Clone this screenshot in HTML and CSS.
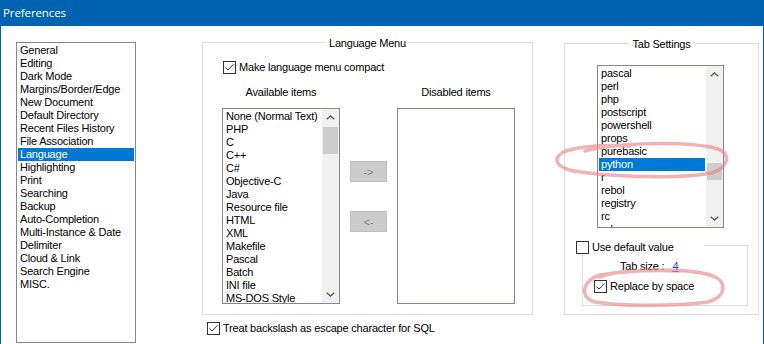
FILE: index.html
```html
<!DOCTYPE html>
<html lang="en">
<head>
    <meta charset="UTF-8">
    <title>Preferences</title>
    <link rel="stylesheet" href="styles.css">
</head>
<body>
    <div class="window">
        <div class="titlebar">Preferences</div>

        <div class="content">
            <ul class="listbox nav-list">
                <li class="item">General</li>
                <li class="item">Editing</li>
                <li class="item">Dark Mode</li>
                <li class="item">Margins/Border/Edge</li>
                <li class="item">New Document</li>
                <li class="item">Default Directory</li>
                <li class="item">Recent Files History</li>
                <li class="item">File Association</li>
                <li class="item selected">Language</li>
                <li class="item">Highlighting</li>
                <li class="item">Print</li>
                <li class="item">Searching</li>
                <li class="item">Backup</li>
                <li class="item">Auto-Completion</li>
                <li class="item">Multi-Instance &amp; Date</li>
                <li class="item">Delimiter</li>
                <li class="item">Cloud &amp; Link</li>
                <li class="item">Search Engine</li>
                <li class="item">MISC.</li>
            </ul>

            <div class="lang-col">
                <div class="group lang-group">
                    <div class="group-title">Language Menu</div>
                    <label class="check compact-check">
                        <span class="box"><svg viewBox="0 0 11 11"><polyline points="1.5,5.5 4,8 9.5,2.2"/></svg></span>
                        Make language menu compact
                    </label>

                    <div class="lang-lists">
                        <div class="list-column">
                            <div class="caption">Available items</div>
                            <div class="listbox lang-list">
                                <div class="items">
                                    <div class="item">None (Normal Text)</div>
                                    <div class="item">PHP</div>
                                    <div class="item">C</div>
                                    <div class="item">C++</div>
                                    <div class="item">C#</div>
                                    <div class="item">Objective-C</div>
                                    <div class="item">Java</div>
                                    <div class="item">Resource file</div>
                                    <div class="item">HTML</div>
                                    <div class="item">XML</div>
                                    <div class="item">Makefile</div>
                                    <div class="item">Pascal</div>
                                    <div class="item">Batch</div>
                                    <div class="item">INI file</div>
                                    <div class="item">MS-DOS Style</div>
                                </div>
                                <div class="scrollbar">
                                    <div class="arrow"><svg viewBox="0 0 9 5"><polyline points="0.7,4.3 4.5,0.9 8.3,4.3"/></svg></div>
                                    <div class="track"><div class="thumb avail-thumb"></div></div>
                                    <div class="arrow"><svg viewBox="0 0 9 5"><polyline points="0.7,0.7 4.5,4.1 8.3,0.7"/></svg></div>
                                </div>
                            </div>
                        </div>

                        <div class="move-buttons">
                            <button type="button">-&gt;</button>
                            <button type="button">&lt;-</button>
                        </div>

                        <div class="list-column">
                            <div class="caption">Disabled items</div>
                            <div class="listbox lang-list"></div>
                        </div>
                    </div>
                </div>

                <label class="check sql-check">
                    <span class="box"><svg viewBox="0 0 11 11"><polyline points="1.5,5.5 4,8 9.5,2.2"/></svg></span>
                    Treat backslash as escape character for SQL
                </label>
            </div>

            <div class="group tab-group">
                <div class="group-title">Tab Settings</div>
                <div class="listbox tab-list">
                    <div class="items">
                        <div class="item">pascal</div>
                        <div class="item">perl</div>
                        <div class="item">php</div>
                        <div class="item">postscript</div>
                        <div class="item">powershell</div>
                        <div class="item">props</div>
                        <div class="item">purebasic</div>
                        <div class="item selected">python</div>
                        <div class="item">r</div>
                        <div class="item">rebol</div>
                        <div class="item">registry</div>
                        <div class="item">rc</div>
                        <div class="item">ruby</div>
                    </div>
                    <div class="scrollbar">
                        <div class="arrow"><svg viewBox="0 0 9 5"><polyline points="0.7,4.3 4.5,0.9 8.3,4.3"/></svg></div>
                        <div class="track"><div class="thumb tab-thumb"></div></div>
                        <div class="arrow"><svg viewBox="0 0 9 5"><polyline points="0.7,0.7 4.5,4.1 8.3,0.7"/></svg></div>
                    </div>
                </div>

                <label class="check default-check">
                    <span class="box"></span>
                    Use default value
                </label>
                <div class="inner-group">
                    <div class="tab-size">Tab size :<a href="#">4</a></div>
                    <label class="check replace-check">
                        <span class="box"><svg viewBox="0 0 11 11"><polyline points="1.5,5.5 4,8 9.5,2.2"/></svg></span>
                        Replace by space
                    </label>
                </div>
            </div>
        </div>
    </div>

    <!-- hand-drawn highlight rings -->
    <svg class="marks" viewBox="0 0 764 344">
        <path d="M585 151 C620 142, 690 141, 718 149 C731 154, 729 167, 712 173 C680 179, 610 177, 574 171 C554 167, 552 157, 566 151 C585 145, 610 145, 630 146"/>
        <path d="M600 277 C622 268, 690 268, 713 276 C728 282, 726 297, 708 302 C670 307, 610 306, 592 301 C580 296, 582 281, 600 275 C630 270, 660 270, 680 271"/>
    </svg>
</body>
</html>
```

FILE: styles.css
```css
* {
    box-sizing: border-box;
}
body {
    margin: 0;
    position: relative;
    font-family: "Liberation Sans", Arial, sans-serif;
    font-size: 11px;
    letter-spacing: -0.2px;
    color: #000;
    background: #fff;
}
.window {
    height: 344px;
    border-left: 1px solid #0063b1;
    border-right: 1px solid #0063b1;
    overflow: hidden;
}
.titlebar {
    height: 26px;
    background: #0063b1;
    color: #fff;
    font-family: "Open Sans", sans-serif;
    font-size: 11.5px;
    letter-spacing: -0.1px;
    line-height: 26px;
    padding-left: 2px;
}
.content {
    display: flex;
    align-items: flex-start;
    padding: 16px 0 0 15px;
}
.listbox {
    border: 1px solid #828790;
    background: #fff;
    overflow: hidden;
}
.nav-list {
    width: 120px;
    height: 301px;
    margin: 0;
    padding: 1px;
    list-style: none;
}
.item {
    height: 13px;
    line-height: 13px;
    padding-left: 2px;
    white-space: nowrap;
}
.item.selected {
    background: #0078d7;
    color: #fff;
}
.lang-col {
    margin-left: 66px;
}
.group {
    border: 1px solid #dcdcdc;
}
.group-title {
    width: max-content;
    margin: -6px auto 0;
    padding: 0 3px;
    background: #fff;
    line-height: 13px;
}
.lang-group {
    width: 331px;
    height: 273px;
}
.check {
    display: flex;
    align-items: center;
    gap: 3px;
    line-height: 13px;
    white-space: nowrap;
}
.box {
    width: 13px;
    height: 13px;
    flex: none;
    display: flex;
    border: 1px solid #333;
    background: #fff;
}
.box svg {
    width: 11px;
    height: 11px;
    fill: none;
    stroke: #333;
    stroke-width: 1;
}
.compact-check {
    margin: 11px 0 0 20px;
}
.lang-lists {
    display: flex;
    gap: 10px;
    margin: 12px 0 0 19px;
}
.list-column {
    width: 118px;
}
.caption {
    text-align: center;
    line-height: 13px;
    margin-bottom: 9px;
}
.lang-list {
    height: 196px;
    display: flex;
}
.items {
    flex: 1;
    min-width: 0;
    padding: 1px;
}
.scrollbar {
    width: 17px;
    flex: none;
    display: flex;
    flex-direction: column;
    background: #f0f0f0;
}
.arrow {
    height: 17px;
    flex: none;
    display: flex;
    align-items: center;
    justify-content: center;
}
.arrow svg {
    width: 9px;
    height: 5px;
    fill: none;
    stroke: #606060;
    stroke-width: 1.4;
}
.track {
    flex: 1;
}
.thumb {
    margin: 0 1px;
    background: #cdcdcd;
}
.avail-thumb {
    margin-top: 1px;
    height: 27px;
}
.tab-thumb {
    margin-top: 80px;
    height: 17px;
}
.move-buttons {
    width: 37px;
    padding-top: 75px;
    display: flex;
    flex-direction: column;
    gap: 29px;
}
.move-buttons button {
    height: 21px;
    padding: 0;
    background: #cccccc;
    border: 1px solid #bfbfbf;
    color: #838383;
    font: inherit;
}
.sql-check {
    margin: 7px 0 0 5px;
}
.tab-group {
    width: 195px;
    height: 272px;
    margin: 1px 0 0 31px;
}
.tab-list {
    width: 127px;
    height: 163px;
    display: flex;
    margin: 14px 0 0 32px;
}
.default-check {
    position: relative;
    z-index: 1;
    width: 128px;
    margin: 13px 0 0 11px;
    background: #fff;
}
.inner-group {
    width: 166px;
    height: 61px;
    margin: -9px 0 0 17px;
    border: 1px solid #dcdcdc;
}
.tab-size {
    margin: 14px 0 0 37px;
    line-height: 13px;
}
.tab-size a {
    margin-left: 8px;
    color: #3434ff;
}
.replace-check {
    margin: 7px 0 0 11px;
}
.marks {
    position: absolute;
    top: 0;
    left: 0;
    width: 764px;
    height: 344px;
    pointer-events: none;
    fill: none;
    stroke: #e77f7f;
    stroke-width: 3.5;
    stroke-linecap: round;
    opacity: 0.6;
}
```
